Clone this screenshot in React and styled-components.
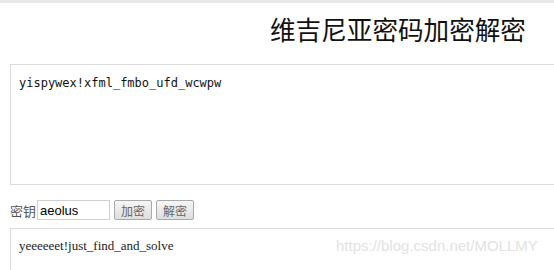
import React from "react";
import styled, { createGlobalStyle } from "styled-components";

const GlobalStyle = createGlobalStyle`
  html, body {
    margin: 0;
    padding: 0;
    background: #fff;
    overflow: hidden;
  }
`;

const App = () => {
  return (
    <>
      <GlobalStyle />
      <Page>
        <TopRule />
        <Title>维吉尼亚密码加密解密</Title>
        <InputArea>yispywex!xfml_fmbo_ufd_wcwpw</InputArea>
        <KeyRow>
          <Label>密钥</Label>
          <KeyInput defaultValue="aeolus" />
          <Button>加密</Button>
          <Button>解密</Button>
        </KeyRow>
        <OutputBox>
          <Result>yeeeeeet!just_find_and_solve</Result>
          <Watermark>https://blog.csdn.net/MOLLMY</Watermark>
        </OutputBox>
      </Page>
    </>
  );
};

const Page = styled.div`
  width: 554px;
  height: 270px;
  overflow: hidden;
  display: flex;
  flex-direction: column;
  & > * {
    flex-shrink: 0;
  }
`;

const TopRule = styled.div`
  height: 3px;
  background: #e8e8e8;
`;

const Title = styled.h1`
  margin: 9px 0 0 270px;
  height: 33px;
  font-family: "Noto Sans CJK SC", sans-serif;
  font-weight: normal;
  font-size: 25.6px;
  line-height: 33px;
  letter-spacing: 0;
  color: #111;
  white-space: nowrap;
`;

const InputArea = styled.div`
  margin: 19px 0 0 10px;
  width: 580px;
  height: 121px;
  box-sizing: border-box;
  border: 1px solid #dcdcdc;
  padding: 10px 8px;
  font-family: Consolas, "DejaVu Sans Mono", monospace;
  font-size: 12px;
  line-height: 16px;
  color: #111;
`;

const KeyRow = styled.div`
  margin: 15px 0 0 10px;
  display: flex;
  align-items: center;
  gap: 4px;
  height: 20px;
`;

const Label = styled.span`
  font-family: "Noto Sans CJK SC", serif;
  font-size: 13px;
  color: #555;
  margin-right: -3px;
`;

const KeyInput = styled.input`
  width: 73px;
  height: 20px;
  box-sizing: border-box;
  border: 1px solid #d0d0d0;
  padding: 0 2px;
  font-family: "Liberation Sans", Arial, sans-serif;
  font-size: 13px;
  color: #000;
  outline: none;
`;

const Button = styled.button`
  height: 20px;
  width: 38px;
  padding: 0;
  box-sizing: border-box;
  border: 1px solid #a9a9a9;
  border-radius: 2px;
  background: linear-gradient(#f6f6f6, #dedede);
  font-family: "Noto Sans CJK SC", serif;
  font-size: 12px;
  color: #666;
`;

const OutputBox = styled.div`
  position: relative;
  margin: 8px 0 0 10px;
  width: 580px;
  height: 80px;
  box-sizing: border-box;
  border: 1px solid #dcdcdc;
  padding: 9px 8px;
`;

const Result = styled.div`
  font-family: "Liberation Serif", "Times New Roman", serif;
  font-size: 13px;
  line-height: 16px;
  color: #222;
`;

const Watermark = styled.span`
  position: absolute;
  left: 325px;
  top: 8px;
  font-family: "Liberation Sans", Arial, sans-serif;
  font-size: 15px;
  color: #e2e2e2;
  white-space: nowrap;
`;

export default App;
